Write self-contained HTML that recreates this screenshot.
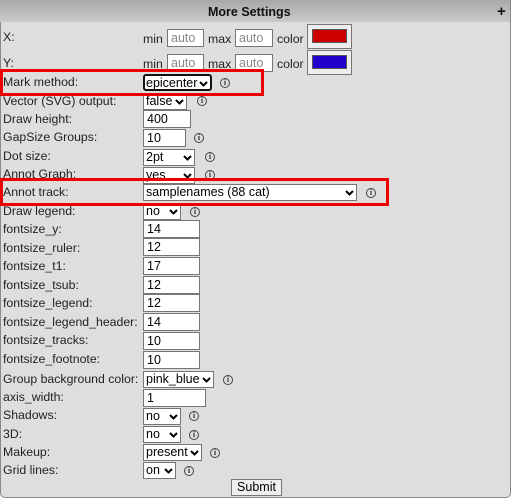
<!DOCTYPE html>
<html><head><style>
*{box-sizing:border-box;margin:0;padding:0}
body{width:513px;height:503px;background:#fff;font-family:"Liberation Sans",Arial,sans-serif;font-size:12.3px;color:#222;position:relative;overflow:hidden}
#panel{position:absolute;left:0;top:0;width:511px;height:498px;background:#dedede;border:1px solid #888;border-top:none;border-radius:0 0 5px 5px}
#hdr{position:absolute;left:0;top:0;width:510px;height:22px;background:linear-gradient(#a8a8a8,#cacaca);font-weight:bold;font-size:12.5px;color:#111}
#hdr .t{position:absolute;left:208px;top:5px}
#hdr .p{position:absolute;left:497px;top:3px;font-size:15px}
.a{position:absolute;white-space:nowrap;line-height:15px}
.lab{left:3px}
.in{position:absolute;left:143px;height:18px;background:#fff;border:1px solid #767676;padding-left:3px;line-height:16px;font-size:12.5px;color:#000}
.sel{position:absolute;left:143px;height:17px;background:#fff;border:1px solid #767676;padding-left:2px;line-height:15px;font-size:12.5px;color:#000;overflow:hidden;white-space:nowrap}
.sel svg{position:absolute;right:2px;top:5px}
.i{position:absolute;width:10px;height:10px;border:1px solid #444;border-radius:50%;font-size:8px;line-height:8px;text-align:center;font-weight:bold;color:#333;font-family:"Liberation Serif",serif}
.rb{position:absolute;border:3px solid #e00;}
.g{color:#888}
.cb{position:absolute;left:307px;width:45px;height:25px;border:1px solid #777;background:#eee}
.cb div{position:absolute;left:4px;top:4px;width:35px;height:14px;border:1px solid #555}
</style></head><body>
<div id="panel"></div>
<div id="hdr"><span class="t">More Settings</span><span class="p">+</span></div>

<div class="a lab" style="top:30px">X:</div>
<div class="a" style="left:143px;top:32px">min</div>
<div class="in g" style="left:167px;top:29px;width:37px">auto</div>
<div class="a" style="left:208px;top:32px">max</div>
<div class="in g" style="left:235px;top:29px;width:38px">auto</div>
<div class="a" style="left:277px;top:32px">color</div>
<div class="cb" style="top:24px"><div style="background:#cc0000"></div></div>

<div class="a lab" style="top:56px">Y:</div>
<div class="a" style="left:143px;top:57px">min</div>
<div class="in g" style="left:167px;top:54px;width:37px">auto</div>
<div class="a" style="left:208px;top:57px">max</div>
<div class="in g" style="left:235px;top:54px;width:38px">auto</div>
<div class="a" style="left:277px;top:57px">color</div>
<div class="cb" style="top:50px"><div style="background:#2200cc"></div></div>

<div class="a lab" style="top:75px">Mark method:</div>
<div class="sel" style="top:74px;width:69px;border:2px solid #111;border-radius:3px;padding-left:1px">epicenter<svg width="9" height="6"><path d="M1 1L4.5 4.5L8 1" stroke="#000" stroke-width="2" fill="none"/></svg></div>
<div class="i" style="left:220px;top:78px">i</div>

<div class="a lab" style="top:94px">Vector (SVG) output:</div>
<div class="sel" style="top:93px;width:44px">false<svg width="9" height="6"><path d="M1 1L4.5 4.5L8 1" stroke="#000" stroke-width="2" fill="none"/></svg></div>
<div class="i" style="left:197px;top:96px">i</div>

<div class="a lab" style="top:112px">Draw height:</div>
<div class="in" style="top:110px;width:48px">400</div>

<div class="a lab" style="top:130px">GapSize Groups:</div>
<div class="in" style="top:129px;width:43px">10</div>
<div class="i" style="left:194px;top:133px">i</div>

<div class="a lab" style="top:149px">Dot size:</div>
<div class="sel" style="top:149px;width:52px">2pt<svg width="9" height="6"><path d="M1 1L4.5 4.5L8 1" stroke="#000" stroke-width="2" fill="none"/></svg></div>
<div class="i" style="left:205px;top:152px">i</div>

<div class="a lab" style="top:167px">Annot Graph:</div>
<div class="sel" style="top:167px;width:52px">yes<svg width="9" height="6"><path d="M1 1L4.5 4.5L8 1" stroke="#000" stroke-width="2" fill="none"/></svg></div>
<div class="i" style="left:205px;top:170px">i</div>

<div class="a lab" style="top:185px">Annot track:</div>
<div class="sel" style="top:184px;width:214px">samplenames (88 cat)<svg width="9" height="6"><path d="M1 1L4.5 4.5L8 1" stroke="#000" stroke-width="2" fill="none"/></svg></div>
<div class="i" style="left:366px;top:188px">i</div>

<div class="a lab" style="top:204px">Draw legend:</div>
<div class="sel" style="top:203px;width:38px">no<svg width="9" height="6"><path d="M1 1L4.5 4.5L8 1" stroke="#000" stroke-width="2" fill="none"/></svg></div>
<div class="i" style="left:190px;top:207px">i</div>

<div class="a lab" style="top:222px">fontsize_y:</div><div class="in" style="top:220px;width:57px">14</div>
<div class="a lab" style="top:241px">fontsize_ruler:</div><div class="in" style="top:238px;width:57px">12</div>
<div class="a lab" style="top:259px">fontsize_t1:</div><div class="in" style="top:257px;width:57px">17</div>
<div class="a lab" style="top:278px">fontsize_tsub:</div><div class="in" style="top:276px;width:57px">12</div>
<div class="a lab" style="top:296px">fontsize_legend:</div><div class="in" style="top:294px;width:57px">12</div>
<div class="a lab" style="top:315px">fontsize_legend_header:</div><div class="in" style="top:313px;width:57px">14</div>
<div class="a lab" style="top:333px">fontsize_tracks:</div><div class="in" style="top:332px;width:57px">10</div>
<div class="a lab" style="top:352px">fontsize_footnote:</div><div class="in" style="top:351px;width:57px">10</div>

<div class="a lab" style="top:372px">Group background color:</div>
<div class="sel" style="top:371px;width:71px">pink_blue<svg width="9" height="6"><path d="M1 1L4.5 4.5L8 1" stroke="#000" stroke-width="2" fill="none"/></svg></div>
<div class="i" style="left:223px;top:375px">i</div>

<div class="a lab" style="top:390px">axis_width:</div><div class="in" style="top:389px;width:63px">1</div>

<div class="a lab" style="top:408px">Shadows:</div>
<div class="sel" style="top:408px;width:38px">no<svg width="9" height="6"><path d="M1 1L4.5 4.5L8 1" stroke="#000" stroke-width="2" fill="none"/></svg></div>
<div class="i" style="left:189px;top:411px">i</div>

<div class="a lab" style="top:427px">3D:</div>
<div class="sel" style="top:426px;width:38px">no<svg width="9" height="6"><path d="M1 1L4.5 4.5L8 1" stroke="#000" stroke-width="2" fill="none"/></svg></div>
<div class="i" style="left:189px;top:430px">i</div>

<div class="a lab" style="top:445px">Makeup:</div>
<div class="sel" style="top:444px;width:59px">present<svg width="9" height="6"><path d="M1 1L4.5 4.5L8 1" stroke="#000" stroke-width="2" fill="none"/></svg></div>
<div class="i" style="left:210px;top:448px">i</div>

<div class="a lab" style="top:463px">Grid lines:</div>
<div class="sel" style="top:462px;width:33px">on<svg width="9" height="6"><path d="M1 1L4.5 4.5L8 1" stroke="#000" stroke-width="2" fill="none"/></svg></div>
<div class="i" style="left:184px;top:466px">i</div>

<div style="position:absolute;left:231px;top:479px;width:51px;height:17px;border:1px solid #777;background:#efefef;font-size:12.5px;line-height:15px;text-align:center;color:#000">Submit</div>

<div class="rb" style="left:0;top:69px;width:264px;height:27px"></div>
<div class="rb" style="left:0;top:178px;width:389px;height:28px"></div>
</body></html>
